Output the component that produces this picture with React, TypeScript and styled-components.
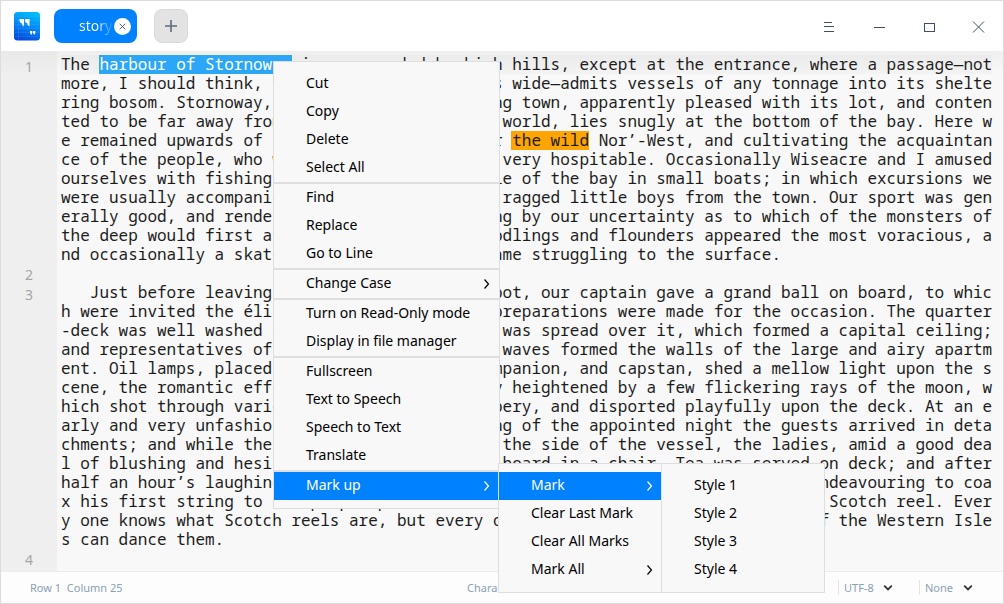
import React from "react";
import styled, { createGlobalStyle, css } from "styled-components";

const GlobalStyle = createGlobalStyle`
  * { box-sizing: border-box; }
  body { margin: 0; font-family: "Noto Sans", sans-serif; }
`;

const COLUMNS = 97;
const row = (start: string, end: string) => start + end.padStart(COLUMNS - start.length);

const Window = styled.div`
  position: relative;
  display: flex;
  flex-direction: column;
  width: 1004px;
  height: 604px;
  overflow: hidden;
  border: 1px solid #dcdcdc;
  background: #f8f8f8;
`;

const TitleBar = styled.header`
  display: flex;
  align-items: center;
  flex: none;
  height: 50px;
  padding-left: 12px;
  background: #fff;
`;

const Logo = styled.svg`
  display: block;
  width: 28px;
  height: 30px;
`;

const Tab = styled.div`
  position: relative;
  display: flex;
  align-items: center;
  justify-content: flex-end;
  width: 83px;
  height: 34px;
  margin-left: 13px;
  padding-right: 6px;
  border-radius: 8px;
  background: #0081ff;
`;

const TabLabel = styled.span`
  width: 34px;
  overflow: hidden;
  white-space: nowrap;
  font-size: 14px;
  line-height: 20px;
  color: transparent;
  background: linear-gradient(90deg, #fff 52%, rgba(255, 255, 255, 0.15) 95%);
  background-clip: text;
  -webkit-background-clip: text;
`;

const TabClose = styled.span`
  display: grid;
  place-items: center;
  width: 17px;
  height: 17px;
  margin-left: 1px;
  border-radius: 50%;
  background: #fff;
`;

const NewTab = styled.div`
  display: grid;
  place-items: center;
  width: 34px;
  height: 34px;
  margin-left: 17px;
  border: 1px solid #d9d9d9;
  border-radius: 8px;
  background: #e3e3e3;
`;

const WindowControls = styled.div`
  display: flex;
  margin-left: auto;
`;

const Control = styled.div`
  display: grid;
  place-items: center;
  width: 50px;
  height: 50px;
`;

const Editor = styled.main`
  display: flex;
  flex: none;
  height: 520px;
  background: linear-gradient(#efefef, #f8f8f8 24px);
`;

const Gutter = styled.div`
  flex: none;
  width: 56px;
  padding-top: 6px;
  background: linear-gradient(#e9e9e9, #efefef 24px);
  color: #a5a5a5;
  font-size: 14px;
  line-height: 20px;
  text-align: center;
`;

const LineNumber = styled.div<{ $height: number }>`
  height: ${(p) => p.$height}px;
`;

const TextArea = styled.div`
  flex: 1;
  padding: 4px 11px 0 4px;
  font-family: "Noto Sans Mono", "DejaVu Sans Mono", monospace;
  font-size: 16px;
  line-height: 19px;
  color: #1c1c1c;
`;

const TextLine = styled.div<{ $current?: boolean }>`
  height: 19px;
  white-space: pre;
  ${(p) => p.$current && css`background: linear-gradient(#ebebeb, #f3f3f3);`}
`;

const Selected = styled.span`
  display: inline-block;
  height: 19px;
  background: #2ca7f8;
  box-shadow: 1px 0 #2ca7f8;
  color: #fff;
`;

const Marked = styled.span`
  display: inline-block;
  height: 19px;
  background: #ffa503;
  box-shadow: -1px 0 #ffa503;
`;

const StatusBar = styled.footer`
  display: flex;
  align-items: center;
  flex: 1;
  padding: 0 30px 0 29px;
  border-top: 1px solid #ececec;
  background: #fdfdfd;
  color: #8aa1b4;
  font-size: 11px;
  white-space: pre;
`;

const Position = styled.span`
  width: 92px;
`;

const Characters = styled.span`
  width: 90px;
  margin-left: 345px;
`;

const Picker = styled.span<{ $width: number }>`
  display: flex;
  align-items: center;
  justify-content: space-between;
  width: ${(p) => p.$width}px;
  height: 15px;
  padding-left: 5px;
  border-left: 1px solid #e3e3e3;
  & + & { margin-left: 26px; }
`;

const Pickers = styled.span`
  display: flex;
  margin-left: auto;
`;

const Menu = styled.div<{ $x: number; $y: number; $width: number }>`
  position: absolute;
  left: ${(p) => p.$x - 1}px;
  top: ${(p) => p.$y - 1}px;
  width: ${(p) => p.$width}px;
  padding: 8px 0;
  border: 1px solid #dedede;
  background: #f8f8f8;
`;

const MenuRow = styled.div<{ $active?: boolean; $inset: number }>`
  display: flex;
  align-items: center;
  justify-content: space-between;
  height: 28px;
  padding: 0 ${(p) => p.$inset}px 3px 32px;
  font-size: 14px;
  line-height: 19px;
  background: ${(p) => (p.$active ? "#0081ff" : "transparent")};
  color: ${(p) => (p.$active ? "#fff" : "#000")};
`;

const Separator = styled.div`
  height: 2px;
  background: #dfdfdf;
`;

const Arrow = styled.svg`
  display: block;
  width: 8px;
  height: 12px;
  margin-top: 2px;
`;

type Entry = { label: string; sub?: boolean; active?: boolean };

const mainGroups: Entry[][] = [
  [{ label: "Cut" }, { label: "Copy" }, { label: "Delete" }, { label: "Select All" }],
  [{ label: "Find" }, { label: "Replace" }, { label: "Go to Line" }],
  [{ label: "Change Case", sub: true }],
  [{ label: "Turn on Read-Only mode" }, { label: "Display in file manager" }],
  [{ label: "Fullscreen" }, { label: "Text to Speech" }, { label: "Speech to Text" }, { label: "Translate" }],
  [{ label: "Mark up", sub: true, active: true }],
];

const markUpGroups: Entry[][] = [
  [
    { label: "Mark", sub: true, active: true },
    { label: "Clear Last Mark" },
    { label: "Clear All Marks" },
    { label: "Mark All", sub: true },
  ],
];

const styleGroups: Entry[][] = [
  [{ label: "Style 1" }, { label: "Style 2" }, { label: "Style 3" }, { label: "Style 4" }],
];

type ContextMenuProps = { x: number; y: number; width: number; inset?: number; groups: Entry[][] };

function ContextMenu({ x, y, width, inset = 7, groups }: ContextMenuProps) {
  return (
    <Menu $x={x} $y={y} $width={width}>
      {groups.map((group, i) => (
        <React.Fragment key={i}>
          {i > 0 && <Separator />}
          {group.map((entry) => (
            <MenuRow key={entry.label} $active={entry.active} $inset={inset}>
              {entry.label}
              {entry.sub && (
                <Arrow viewBox="0 0 8 12" fill="none" stroke="currentColor" strokeWidth="1.2">
                  <path d="M1.5 1.5 L5.5 6 L1.5 10.5" />
                </Arrow>
              )}
            </MenuRow>
          ))}
        </React.Fragment>
      ))}
    </Menu>
  );
}

const linesAfterFirst: React.ReactNode[] = [
  row("more, I should think, than some dozen of miles", "wide—admits vessels of any tonnage into its shelte"),
  row("ring bosom. Stornoway, a pleasant looki", "ng town, apparently pleased with its lot, and conten"),
  row("ted to be far away from the bustle of the", "world, lies snugly at the bottom of the bay. Here w"),
  <>
    {"e remained upwards of a week, waiting".padEnd(43)}
    {"for "}
    <Marked>the wild</Marked>
    {" Nor’-West, and cultivating the acquaintan"}
  </>,
  row("ce of the people, who were found to be", "very hospitable. Occasionally Wiseacre and I amused"),
  row("ourselves with fishing about the", "middle of the bay in small boats; in which excursions we"),
  row("were usually accompanied by several", "ragged little boys from the town. Our sport was gen"),
  row("erally good, and rendered more", "exciting by our uncertainty as to which of the monsters of"),
  row("the deep would first attack us.", "Codlings and flounders appeared the most voracious, a"),
  "nd occasionally a skate or a dogfish".padEnd(44) + "came struggling to the surface.",
  "",
  row("   Just before leaving this quiet", "spot, our captain gave a grand ball on board, to whic"),
  row("h were invited the élite, and great", "preparations were made for the occasion. The quarter"),
  row("-deck was well washed and an awning", "was spread over it, which formed a capital ceiling;"),
  row("and representatives of the sea and", "waves formed the walls of the large and airy apartm"),
  row("ent. Oil lamps, placed on the", "companion, and capstan, shed a mellow light upon the s"),
  row("cene, the romantic effect of", "greatly heightened by a few flickering rays of the moon, w"),
  row("hich shot through various parts of", "drapery, and disported playfully upon the deck. At an e"),
  row("arly and very unfashionable hour", "evening of the appointed night the guests arrived in deta"),
  row("chments; and while the men came over", "the side of the vessel, the ladies, amid a good dea"),
  row("l of blushing and hesitation came on", "board in a chair. Tea was served on deck; and after"),
  row("half an hour’s laughing and talking the fiddler was seen", "endeavouring to coa"),
  row("x his first string to the proper pitch and we joined in a", "Scotch reel. Ever"),
  row("y one knows what Scotch reels are, but every one", "of the Western Isle"),
  "s can dance them.",
];

function Chevron() {
  return (
    <svg width="10" height="8" viewBox="0 0 10 8" fill="none" stroke="#333" strokeWidth="1.8">
      <path d="M1.2 1.7 L5 5.5 L8.8 1.7" />
    </svg>
  );
}

function AppLogo() {
  return (
    <Logo viewBox="0 0 28 30">
      <defs>
        <linearGradient id="page" x1="0.65" y1="0" x2="0.35" y2="1">
          <stop offset="0" stopColor="#00bdfb" />
          <stop offset="0.5" stopColor="#0486f5" />
          <stop offset="1" stopColor="#0548dc" />
        </linearGradient>
      </defs>
      <rect x="1" y="1" width="26" height="28.5" rx="3.5" fill="url(#page)" />
      <path d="M2 5.5H26M2 9.5H26M2 13.5H26M2 17.5H26M2 21.5H26M2 25.5H26M5.5 1V29" stroke="#5cc4ff" strokeOpacity=".22" strokeWidth=".7" />
      <path d="M6.500 8h4.500v7.500q-2.300-.6-2.300-3.200q-2.200-.4-2.200-2.300zM12 8h4.500v7.500q-2.300-.6-2.300-3.200q-2.200-.4-2.200-2.300z" fill="#fff" />
      <path d="M17 20h2.300v2q0 1.400-1.600 2l.3-1.500h-1zM20 20h2.300v2q0 1.400-1.600 2l.3-1.500h-1z" fill="#fff" />
    </Logo>
  );
}

export default function App() {
  return (
    <>
      <GlobalStyle />
      <Window>
        <TitleBar>
          <AppLogo />
          <Tab>
            <TabLabel>story</TabLabel>
            <TabClose>
              <svg width="7" height="7" viewBox="0 0 7 7" stroke="#5a6478" strokeWidth="1">
                <path d="M.7 .7L6.300 6.300M6.300 .7L.7 6.300" />
              </svg>
            </TabClose>
          </Tab>
          <NewTab>
            <svg width="12" height="12" viewBox="0 0 12 12" stroke="#5f6b7c" strokeWidth="1.6">
              <path d="M0 6H12M6 0V12" />
            </svg>
          </NewTab>
          <WindowControls>
            <Control>
              <svg width="12" height="12" viewBox="0 0 12 12" stroke="#414d68" shapeRendering="crispEdges">
                <path d="M2 2.500H10M2 6.500H12M2 11.500H12" />
              </svg>
            </Control>
            <Control>
              <svg width="14" height="12" viewBox="0 0 14 12" stroke="#414d68" shapeRendering="crispEdges">
                <path d="M3 7.500H14" />
              </svg>
            </Control>
            <Control>
              <svg width="14" height="12" viewBox="0 0 14 12" fill="none" stroke="#414d68" shapeRendering="crispEdges">
                <rect x="3.500" y="3.500" width="10" height="8" />
              </svg>
            </Control>
            <Control>
              <svg width="14" height="14" viewBox="0 0 14 14" stroke="#414d68" strokeWidth="1">
                <path d="M2 2.500L13 13.500M13 2.500L2 13.500" />
              </svg>
            </Control>
          </WindowControls>
        </TitleBar>

        <Editor>
          <Gutter>
            <LineNumber $height={208}>1</LineNumber>
            <LineNumber $height={20}>2</LineNumber>
            <LineNumber $height={265}>3</LineNumber>
            <LineNumber $height={20}>4</LineNumber>
          </Gutter>
          <TextArea>
            <TextLine $current>
              {"The "}
              <Selected>harbour of Stornoway</Selected>
              {" is surrounded by high hills, except at the entrance, where a passage—not"}
            </TextLine>
            {linesAfterFirst.map((line, i) => (
              <TextLine key={i}>{line}</TextLine>
            ))}
          </TextArea>
        </Editor>

        <StatusBar>
          <Position>{"Row 1  Column 25"}</Position>
          <Characters>Characters 2028</Characters>
          <Pickers>
            <Picker $width={55}>
              UTF-8 <Chevron />
            </Picker>
            <Picker $width={54}>
              None <Chevron />
            </Picker>
          </Pickers>
        </StatusBar>

        <ContextMenu x={273} y={61} width={227} inset={8} groups={mainGroups} />
        <ContextMenu x={661} y={463} width={164} groups={styleGroups} />
        <ContextMenu x={498} y={463} width={164} groups={markUpGroups} />
      </Window>
    </>
  );
}
